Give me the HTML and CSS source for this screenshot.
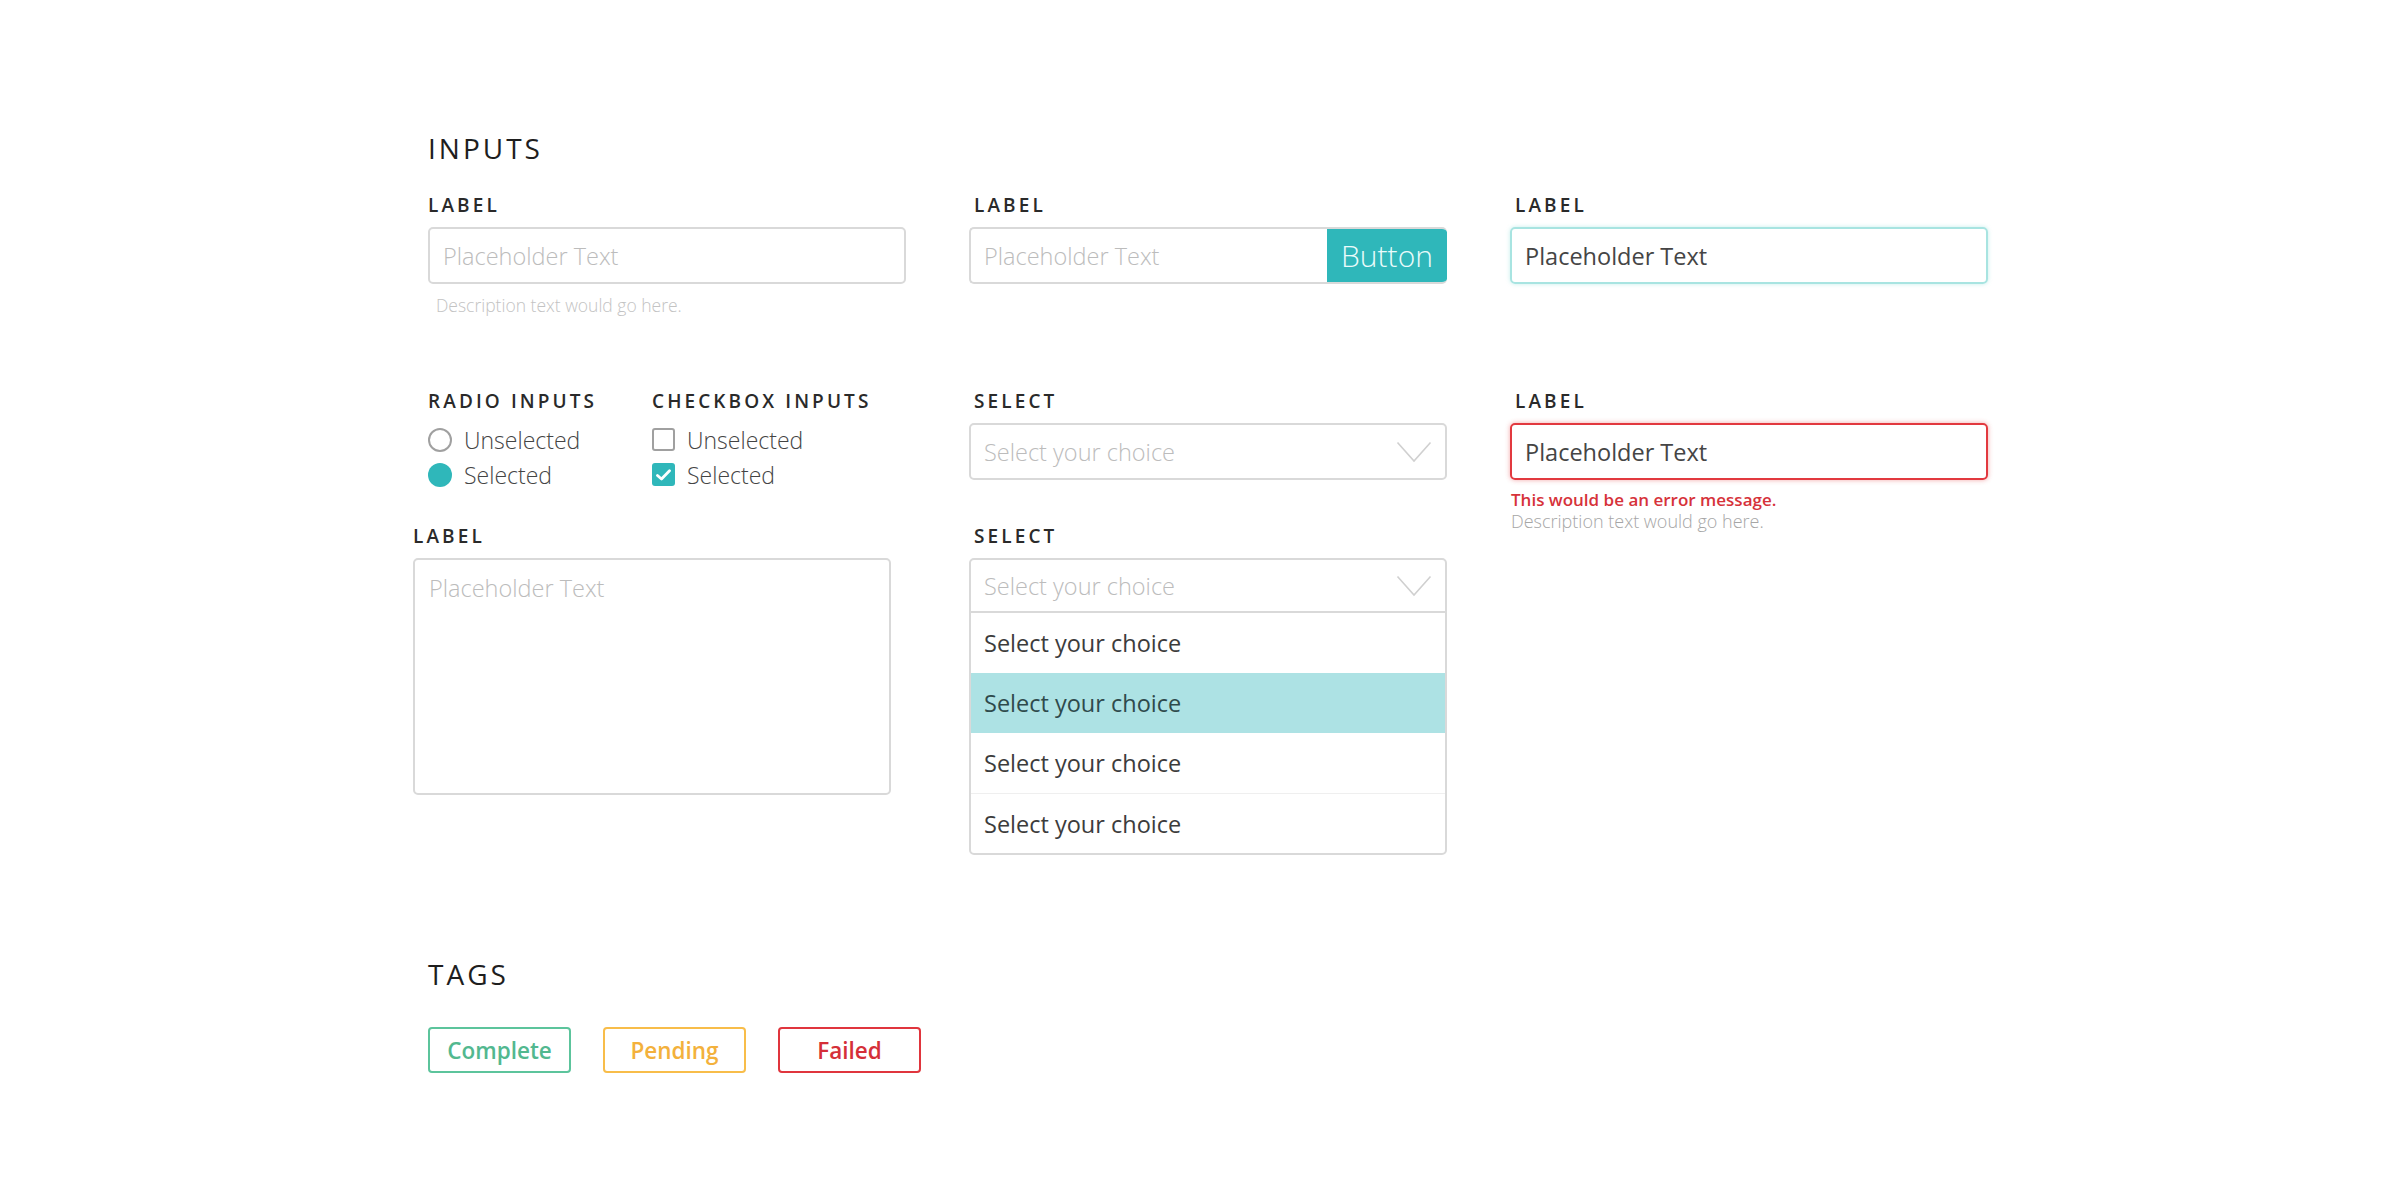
FILE: index.html
```html
<!DOCTYPE html>
<html lang="en">
<head>
<meta charset="utf-8">
<title>Inputs</title>
<link rel="stylesheet" href="styles.css">
</head>
<body>
<main class="page">
  <h2 class="section-title">INPUTS</h2>
  <div class="inputs-grid">
    <div class="field">
      <div class="label">LABEL</div>
      <div class="input"><span class="placeholder">Placeholder Text</span></div>
      <div class="desc desc-light">Description text would go here.</div>
    </div>
    <div class="field">
      <div class="label label-inset">LABEL</div>
      <div class="input input-group">
        <span class="placeholder">Placeholder Text</span>
        <span class="btn">Button</span>
      </div>
    </div>
    <div class="field">
      <div class="label label-inset">LABEL</div>
      <div class="input input-focus"><span class="value">Placeholder Text</span></div>
    </div>

    <div class="choices">
      <div class="choice-col choice-radio">
        <div class="label">RADIO INPUTS</div>
        <div class="option"><span class="radio"></span>Unselected</div>
        <div class="option"><span class="radio radio-on"></span>Selected</div>
      </div>
      <div class="choice-col">
        <div class="label">CHECKBOX INPUTS</div>
        <div class="option"><span class="check"></span>Unselected</div>
        <div class="option"><span class="check check-on"><svg width="15" height="12" viewBox="0 0 15 12"><path d="M1.5 6.5 L5.5 10 L13.5 1.8" fill="none" stroke="#fff" stroke-width="2.8" stroke-linecap="round" stroke-linejoin="round"/></svg></span>Selected</div>
      </div>
    </div>
    <div class="field">
      <div class="label label-inset">SELECT</div>
      <div class="input select">
        <span class="placeholder">Select your choice</span>
        <svg class="chev" width="36" height="22" viewBox="0 0 36 22"><polyline points="1.5,1.5 18,20 34.5,1.5" fill="none" stroke="#d0d0d0" stroke-width="1.6"/></svg>
      </div>
    </div>
    <div class="field">
      <div class="label label-inset">LABEL</div>
      <div class="input input-error"><span class="value">Placeholder Text</span></div>
      <div class="error-msg">This would be an error message.</div>
      <div class="desc desc-dark">Description text would go here.</div>
    </div>

    <div class="field field-textarea">
      <div class="label">LABEL</div>
      <div class="textarea"><span class="placeholder">Placeholder Text</span></div>
    </div>
    <div class="field">
      <div class="label label-inset">SELECT</div>
      <div class="dropdown">
        <div class="dropdown-head">
          <span class="placeholder">Select your choice</span>
          <svg class="chev" width="36" height="22" viewBox="0 0 36 22"><polyline points="1.5,1.5 18,20 34.5,1.5" fill="none" stroke="#d0d0d0" stroke-width="1.6"/></svg>
        </div>
        <div class="dropdown-item">Select your choice</div>
        <div class="dropdown-item active">Select your choice</div>
        <div class="dropdown-item">Select your choice</div>
        <div class="dropdown-item">Select your choice</div>
      </div>
    </div>
    <div></div>
  </div>

  <h2 class="section-title tags-title">TAGS</h2>
  <div class="tags">
    <span class="tag tag-complete">Complete</span>
    <span class="tag tag-pending">Pending</span>
    <span class="tag tag-failed">Failed</span>
  </div>
</main>
</body>
</html>
```

FILE: styles.css
```css
* { box-sizing: border-box; }

body {
  margin: 0;
  background: #ffffff;
  font-family: "Open Sans", "Noto Sans", sans-serif;
  color: #333;
}

.page {
  padding: 130px 0 0 428px;
}

.section-title {
  margin: 0;
  font-size: 28px;
  line-height: 36px;
  font-weight: 400;
  letter-spacing: 3px;
  color: #1e1e1e;
}

.inputs-grid {
  margin-top: 29px;
  display: grid;
  grid-template-columns: 478px 478px 478px;
  grid-template-rows: 196px 135px auto;
  column-gap: 63px;
}

.label {
  font-size: 19px;
  line-height: 20px;
  font-weight: 600;
  letter-spacing: 3.1px;
  color: #2a2a2a;
  margin-bottom: 12px;
}
.label-inset { padding-left: 5px; }

.input {
  height: 57px;
  border: 2px solid #d9d9d9;
  border-radius: 5px;
  display: flex;
  align-items: center;
  padding-left: 13px;
  font-size: 23.5px;
  font-weight: 300;
}

.placeholder { color: #bcbcbc; font-weight: 300; }
.value { color: #454545; font-weight: 400; }

.input-group {
  padding-right: 0;
  overflow: hidden;
  border-right: none;
}
.input-group .placeholder { flex: 1; }
.btn {
  align-self: stretch;
  margin: -2px 0;
  width: 120px;
  background: #2fb7ba;
  color: #e9fbfb;
  font-size: 30px;
  font-weight: 300;
  display: flex;
  align-items: center;
  justify-content: center;
  border-radius: 0 5px 5px 0;
}

.input-focus {
  border-color: #a8e4e1;
  box-shadow: 0 0 4px rgba(90, 205, 200, 0.35);
}

.input-error {
  border-color: #e2393f;
  box-shadow: 0 0 5px rgba(226, 57, 63, 0.45);
}

.desc {
  line-height: 20px;
}
.desc-light {
  margin-top: 11px;
  padding-left: 8px;
  color: #c3c3c3;
  font-size: 17.5px;
  font-weight: 300;
}
.desc-dark {
  padding-left: 1px;
  color: #a6a6a6;
  font-size: 18px;
  font-weight: 300;
}

.error-msg {
  margin-top: 9px;
  padding-left: 1px;
  font-size: 17px;
  line-height: 22px;
  font-weight: 600;
  color: #d6323a;
}

.choices {
  display: flex;
}
.choice-radio { width: 224px; }
.choices .label { margin-bottom: 11px; }

.option {
  display: flex;
  align-items: center;
  gap: 12px;
  height: 35px;
  font-size: 23px;
  font-weight: 300;
  color: #444;
}

.radio {
  width: 24px;
  height: 24px;
  border-radius: 50%;
  border: 2px solid #a0a0a0;
}
.radio-on {
  border: none;
  background: #2fb7ba;
}

.check {
  width: 23px;
  height: 23px;
  border: 2px solid #a0a0a0;
  border-radius: 3px;
  display: flex;
  align-items: center;
  justify-content: center;
}
.check-on {
  border: none;
  background: #2fb7ba;
}

.select {
  justify-content: space-between;
  padding-right: 13px;
}

.field-textarea {
  margin-left: -15px;
  width: 478px;
}
.textarea {
  height: 237px;
  border: 2px solid #d9d9d9;
  border-radius: 5px;
  padding: 14px 14px;
  font-size: 23.5px;
  line-height: 28px;
}

.dropdown {
  border: 2px solid #d9d9d9;
  border-radius: 5px;
  overflow: hidden;
}
.dropdown-head {
  height: 53px;
  display: flex;
  align-items: center;
  justify-content: space-between;
  padding: 0 13px;
  font-size: 23.5px;
  border-bottom: 2px solid #d9d9d9;
}
.dropdown-item {
  height: 60px;
  display: flex;
  align-items: center;
  padding-left: 13px;
  font-size: 23.5px;
  font-weight: 400;
  color: #3c3c3c;
  border-top: 1px solid #efefef;
}
.dropdown-head + .dropdown-item { border-top: none; }
.dropdown-item.active {
  background: #ade2e4;
  color: #2e4a4c;
  border-top: none;
}
.dropdown-item.active + .dropdown-item { border-top: none; }

.tags-title { margin-top: 101px; }

.tags {
  margin-top: 35px;
  display: flex;
  gap: 32px;
}
.tag {
  width: 143px;
  height: 46px;
  border: 2px solid;
  border-radius: 4px;
  display: flex;
  align-items: center;
  justify-content: center;
  font-size: 22.5px;
  font-weight: 600;
}
.tag-complete { border-color: #5cc49c; color: #52b88f; }
.tag-pending { border-color: #f8bd4a; color: #f3b13c; }
.tag-failed { border-color: #e0353d; color: #d52f38; }
```
